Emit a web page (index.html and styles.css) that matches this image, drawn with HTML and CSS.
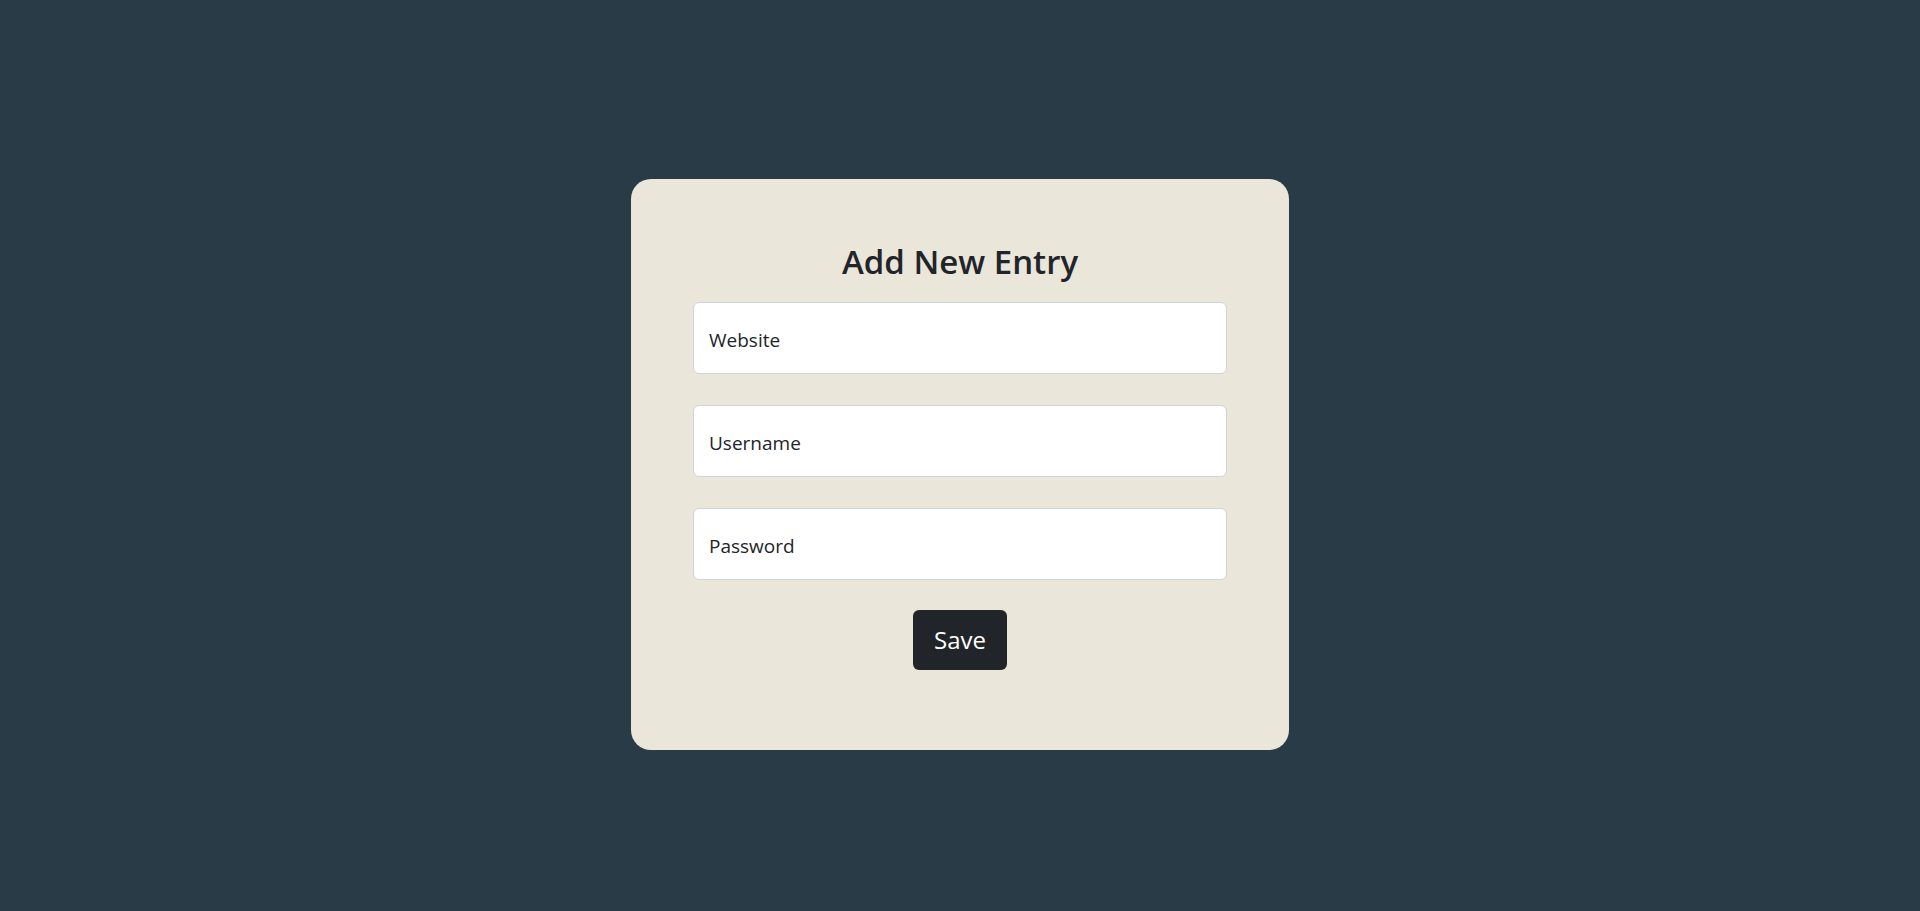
FILE: index.html
```html
<!DOCTYPE html>
<html lang="en">
<head>
<meta charset="utf-8">
<title>Add New Entry</title>
<link rel="stylesheet" href="styles.css">
</head>
<body>
<main class="page">
  <form class="card">
    <h2 class="title">Add New Entry</h2>
    <div class="fields">
      <input class="field" type="text" placeholder="Website">
      <input class="field" type="text" placeholder="Username">
      <input class="field" type="password" placeholder="Password">
    </div>
    <button class="save" type="button">Save</button>
  </form>
</main>
</body>
</html>
```
FILE: styles.css
```css
html, body {
  margin: 0;
  padding: 0;
}
body {
  background: #2a3b48;
  font-family: "Open Sans", "Noto Sans", sans-serif;
  color: #212529;
  min-height: 911px;
}
.page {
  padding-top: 179px;
  display: flex;
  justify-content: center;
}
.card {
  width: 658px;
  box-sizing: border-box;
  padding: 63px 62px 80px;
  background: #eae6d9;
  border-radius: 20px;
  display: flex;
  flex-direction: column;
  align-items: center;
}
.title {
  margin: 0 0 20px;
  font-size: 33px;
  line-height: 1.2;
  font-weight: 600;
  color: #212529;
  text-align: center;
}
.fields {
  align-self: stretch;
  display: flex;
  flex-direction: column;
  gap: 31px;
}
.field {
  display: block;
  width: 100%;
  height: 72px;
  box-sizing: border-box;
  margin: 0;
  padding: 5px 15px 0;
  border: 1px solid #ced4da;
  border-radius: 6px;
  background: #fff;
  font-family: "Open Sans", "Noto Sans", sans-serif;
  font-size: 19px;
  color: #212529;
  outline: none;
}
.field::placeholder {
  color: #212529;
  opacity: 1;
}
.save {
  margin-top: 30px;
  width: 94px;
  height: 60px;
  padding: 0;
  border: none;
  border-radius: 6px;
  background: #212529;
  color: #fff;
  font-family: "Open Sans", "Noto Sans", sans-serif;
  font-size: 24px;
  cursor: pointer;
}
```
